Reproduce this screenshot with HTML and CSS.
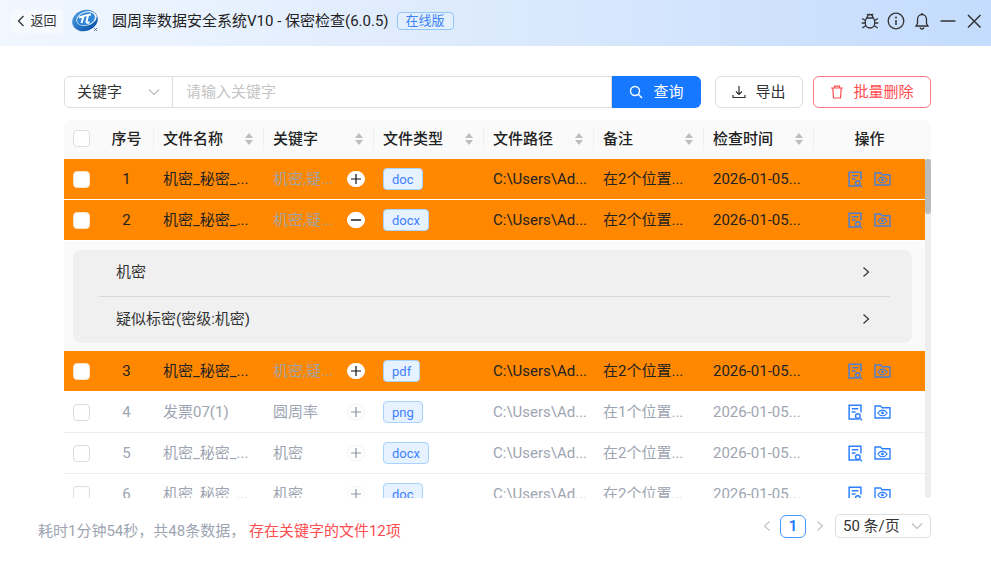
FILE: index.html
```html
<!DOCTYPE html>
<html lang="zh-CN">
<head>
<meta charset="utf-8">
<title>圆周率数据安全系统V10 - 保密检查</title>
<link rel="stylesheet" href="styles.css">
</head>
<body>
<svg class="defs" width="0" height="0" aria-hidden="true">
  <symbol id="i-doc" viewBox="0 0 16 18">
    <path d="M12 16H1.2V1.2h12.6V9" fill="none" stroke="currentColor" stroke-width="1.6"/>
    <path d="M4 5h7M4 8.500h4" fill="none" stroke="currentColor" stroke-width="1.500"/>
    <circle cx="10.500" cy="12.800" r="2.500" fill="none" stroke="currentColor" stroke-width="1.500"/>
    <path d="M12.500 14.800l2.300 2.400" fill="none" stroke="currentColor" stroke-width="1.500"/>
  </symbol>
  <symbol id="i-folder" viewBox="0 0 18 15">
    <path d="M1 1h6l1.500 2H17v11H1z" fill="none" stroke="currentColor" stroke-width="1.500"/>
    <path d="M4 8.500C5.300 6.500 7 5.500 9 5.500s3.700 1 5 3c-1.300 2-3 3-5 3s-3.700-1-5-3z" fill="none" stroke="currentColor" stroke-width="1.200"/>
    <circle cx="9" cy="8.500" r="1.500" fill="currentColor"/>
  </symbol>
  <symbol id="i-sort" viewBox="0 0 10 14">
    <path d="M5 1l4 5H1zM5 13L1 8h8z" fill="#bdbdbd"/>
  </symbol>
  <symbol id="i-plus" viewBox="0 0 18 16">
    <path d="M4 8h10M9 3v10" fill="none" stroke="currentColor" stroke-width="1.200"/>
  </symbol>
  <symbol id="i-minus" viewBox="0 0 18 16">
    <path d="M4 8h10" fill="none" stroke="currentColor" stroke-width="1.400"/>
  </symbol>
  <symbol id="i-chev" viewBox="0 0 10 12">
    <path d="M2.500 1.500L7.500 6l-5 4.500" fill="none" stroke="currentColor" stroke-width="1.200"/>
  </symbol>
</svg>

<header class="titlebar">
  <button class="back">
    <svg class="back-icon" viewBox="0 0 8 12"><path d="M6.500 1L1.500 6l5 5" fill="none" stroke="currentColor" stroke-width="1.300"/></svg>
    返回
  </button>
  <svg class="logo" viewBox="0 0 28 24">
    <defs><linearGradient id="lg" x1="0" y1="0" x2="0.6" y2="1"><stop offset="0" stop-color="#4f9fe4"/><stop offset="1" stop-color="#0f57ad"/></linearGradient></defs>
    <ellipse cx="13" cy="11.500" rx="13" ry="10.500" fill="url(#lg)" transform="rotate(-18 13 11.500)"/>
    <ellipse cx="14.500" cy="9.500" rx="10.500" ry="7" fill="#e6f1fb" transform="rotate(-18 14.500 9.500)"/>
    <ellipse cx="14" cy="9.800" rx="9.200" ry="6.200" fill="#2f86d8" transform="rotate(-18 14 9.800)"/>
    <path d="M7 8.500c4-1.500 8-2.500 12-3M11.500 7.500L9.500 14M16 6.500l-1.500 6c-.3 1.300.8 1.600 3 .8" fill="none" stroke="#fff" stroke-width="2"/>
    <path d="M22 19l3 3M25 19l-3 3" stroke="#5b7fa8" stroke-width="1"/>
  </svg>
  <h1 class="app-title">圆周率数据安全系统V10 - 保密检查(6.0.5)</h1>
  <span class="edition">在线版</span>
  <div class="win-tools">
    <svg class="tool" viewBox="0 0 18 18"><g fill="none" stroke="currentColor" stroke-width="1.300"><path d="M5.500 6h7c1 1.500 1.300 3 1.300 4.500 0 3.200-2 5.500-4.800 5.500s-4.800-2.300-4.800-5.500C4.200 9 4.500 7.500 5.500 6z"/><path d="M6.200 6c0-2 1.200-3.500 2.800-3.500S11.800 4 11.800 6M6 2l1.500 1.500M12 2l-1.500 1.500M1 6.500l3.500 2M17 6.500l-3.500 2M.7 11h3.500M17.300 11h-3.500M1.300 16l3.700-2.500M16.700 16L13 13.500"/></g></svg>
    <svg class="tool" viewBox="0 0 18 18"><circle cx="9" cy="9" r="7.800" fill="none" stroke="currentColor" stroke-width="1.300"/><path d="M9 8v5" stroke="currentColor" stroke-width="1.500"/><circle cx="9" cy="5.500" r="1" fill="currentColor"/></svg>
    <svg class="tool" viewBox="0 0 18 18"><path d="M3 14h12l-1.500-2.500V7.500C13.500 4.500 11.500 2.500 9 2.500S4.500 4.500 4.500 7.500v4z" fill="none" stroke="currentColor" stroke-width="1.300"/><path d="M9 1v1.500M7 15.500c.4 1 1.100 1.500 2 1.500s1.600-.5 2-1.500" fill="none" stroke="currentColor" stroke-width="1.300"/></svg>
    <svg class="tool" viewBox="0 0 18 18"><path d="M1.500 9h15" stroke="currentColor" stroke-width="1.500"/></svg>
    <svg class="tool" viewBox="0 0 18 18"><path d="M3 3l12.500 12.500M15.500 3L3 15.500" stroke="currentColor" stroke-width="1.500"/></svg>
  </div>
</header>

<main class="content">
  <section class="toolbar">
    <div class="search">
      <div class="search-select">关键字
        <svg class="select-chev" viewBox="0 0 12 8"><path d="M1 1.500l5 5 5-5" fill="none" stroke="currentColor" stroke-width="1.100"/></svg>
      </div>
      <div class="search-input">请输入关键字</div>
      <button class="search-btn">
        <svg class="btn-icon" viewBox="0 0 14 14"><circle cx="6" cy="6" r="4.500" fill="none" stroke="currentColor" stroke-width="1.400"/><path d="M9.300 9.300L13 13" stroke="currentColor" stroke-width="1.400"/></svg>
        查询
      </button>
    </div>
    <button class="btn btn-export">
      <svg class="btn-icon" viewBox="0 0 14 14"><path d="M7 1v8M4 6.500L7 9.500l3-3M1 10v2.500h12V10" fill="none" stroke="currentColor" stroke-width="1.200"/></svg>
      导出
    </button>
    <button class="btn btn-delete">
      <svg class="btn-icon" viewBox="0 0 14 14"><path d="M1 3h12M4.500 3V1.200h5V3M2.800 3l.7 10h7l.7-10" fill="none" stroke="currentColor" stroke-width="1.200"/></svg>
      批量删除
    </button>
  </section>

  <section class="table">
    <div class="grid head">
      <div class="cell cb-cell"><span class="check"></span></div>
      <div class="cell center">序号</div>
      <div class="cell sep sortable">文件名称<svg class="sort"><use href="#i-sort"/></svg></div>
      <div class="cell sep sortable">关键字<svg class="sort"><use href="#i-sort"/></svg></div>
      <div class="cell sep sortable">文件类型<svg class="sort"><use href="#i-sort"/></svg></div>
      <div class="cell sep sortable">文件路径<svg class="sort"><use href="#i-sort"/></svg></div>
      <div class="cell sep sortable">备注<svg class="sort"><use href="#i-sort"/></svg></div>
      <div class="cell sep sortable">检查时间<svg class="sort"><use href="#i-sort"/></svg></div>
      <div class="cell sep center">操作</div>
    </div>
    <div class="scroller">
      <div class="rows">
        <div class="grid row hit">
          <div class="cell cb-cell"><span class="check"></span></div>
          <div class="cell center">1</div>
          <div class="cell">机密_秘密_...</div>
          <div class="cell kw"><span class="kw-text">机密,疑...</span><span class="toggle"><svg><use href="#i-plus"/></svg></span></div>
          <div class="cell"><span class="tag">doc</span></div>
          <div class="cell">C:\Users\Ad...</div>
          <div class="cell">在2个位置...</div>
          <div class="cell">2026-01-05...</div>
          <div class="cell actions"><svg class="a-doc"><use href="#i-doc"/></svg><svg class="a-folder"><use href="#i-folder"/></svg></div>
        </div>
        <div class="grid row hit">
          <div class="cell cb-cell"><span class="check"></span></div>
          <div class="cell center">2</div>
          <div class="cell">机密_秘密_...</div>
          <div class="cell kw"><span class="kw-text">机密,疑...</span><span class="toggle"><svg><use href="#i-minus"/></svg></span></div>
          <div class="cell"><span class="tag">docx</span></div>
          <div class="cell">C:\Users\Ad...</div>
          <div class="cell">在2个位置...</div>
          <div class="cell">2026-01-05...</div>
          <div class="cell actions"><svg class="a-doc"><use href="#i-doc"/></svg><svg class="a-folder"><use href="#i-folder"/></svg></div>
        </div>
        <div class="detail">
          <div class="panel">
            <div class="panel-item"><span>机密</span><svg class="chev"><use href="#i-chev"/></svg></div>
            <div class="panel-item"><span>疑似标密(密级:机密)</span><svg class="chev"><use href="#i-chev"/></svg></div>
          </div>
        </div>
        <div class="grid row hit">
          <div class="cell cb-cell"><span class="check"></span></div>
          <div class="cell center">3</div>
          <div class="cell">机密_秘密_...</div>
          <div class="cell kw"><span class="kw-text">机密,疑...</span><span class="toggle"><svg><use href="#i-plus"/></svg></span></div>
          <div class="cell"><span class="tag">pdf</span></div>
          <div class="cell">C:\Users\Ad...</div>
          <div class="cell">在2个位置...</div>
          <div class="cell">2026-01-05...</div>
          <div class="cell actions"><svg class="a-doc"><use href="#i-doc"/></svg><svg class="a-folder"><use href="#i-folder"/></svg></div>
        </div>
        <div class="grid row">
          <div class="cell cb-cell"><span class="check"></span></div>
          <div class="cell center">4</div>
          <div class="cell">发票07(1)</div>
          <div class="cell kw"><span class="kw-text">圆周率</span><span class="toggle"><svg><use href="#i-plus"/></svg></span></div>
          <div class="cell"><span class="tag">png</span></div>
          <div class="cell">C:\Users\Ad...</div>
          <div class="cell">在1个位置...</div>
          <div class="cell">2026-01-05...</div>
          <div class="cell actions"><svg class="a-doc"><use href="#i-doc"/></svg><svg class="a-folder"><use href="#i-folder"/></svg></div>
        </div>
        <div class="grid row">
          <div class="cell cb-cell"><span class="check"></span></div>
          <div class="cell center">5</div>
          <div class="cell">机密_秘密_...</div>
          <div class="cell kw"><span class="kw-text">机密</span><span class="toggle"><svg><use href="#i-plus"/></svg></span></div>
          <div class="cell"><span class="tag">docx</span></div>
          <div class="cell">C:\Users\Ad...</div>
          <div class="cell">在2个位置...</div>
          <div class="cell">2026-01-05...</div>
          <div class="cell actions"><svg class="a-doc"><use href="#i-doc"/></svg><svg class="a-folder"><use href="#i-folder"/></svg></div>
        </div>
        <div class="grid row">
          <div class="cell cb-cell"><span class="check"></span></div>
          <div class="cell center">6</div>
          <div class="cell">机密_秘密_...</div>
          <div class="cell kw"><span class="kw-text">机密</span><span class="toggle"><svg><use href="#i-plus"/></svg></span></div>
          <div class="cell"><span class="tag">doc</span></div>
          <div class="cell">C:\Users\Ad...</div>
          <div class="cell">在2个位置...</div>
          <div class="cell">2026-01-05...</div>
          <div class="cell actions"><svg class="a-doc"><use href="#i-doc"/></svg><svg class="a-folder"><use href="#i-folder"/></svg></div>
        </div>
      </div>
      <div class="scrollbar"><div class="thumb"></div></div>
    </div>
  </section>

  <footer class="footer">
    <div class="summary">耗时1分钟54秒，共48条数据， <span class="alert">存在关键字的文件12项</span></div>
    <div class="pager">
      <svg class="page-arrow" viewBox="0 0 10 12"><path d="M7.500 1.500L2.500 6l5 4.500" fill="none" stroke="currentColor" stroke-width="1.200"/></svg>
      <span class="page-current">1</span>
      <svg class="page-arrow" viewBox="0 0 10 12"><path d="M2.500 1.500L7.500 6l-5 4.500" fill="none" stroke="currentColor" stroke-width="1.200"/></svg>
      <div class="page-size">50 条/页
        <svg class="select-chev" viewBox="0 0 12 8"><path d="M1 1.500l5 5 5-5" fill="none" stroke="currentColor" stroke-width="1.100"/></svg>
      </div>
    </div>
  </footer>
</main>
</body>
</html>
```

FILE: styles.css
```css
* { box-sizing: border-box; }
html, body { margin: 0; height: 100%; overflow: hidden; background: #fff; }
body {
  font-family: Roboto, "Noto Sans CJK SC", sans-serif;
  font-size: 15px;
  line-height: 20px;
  color: #222;
}
button { font: inherit; cursor: pointer; }
.defs { position: absolute; }

/* title bar */
.titlebar {
  height: 46px;
  display: flex;
  align-items: center;
  padding: 0 8px 4px 10px;
  background: linear-gradient(90deg, #f1f7ff 0%, #deebfd 45%, #c4dcfd 100%);
}
.back {
  width: 54px;
  height: 25px;
  margin-right: 8px;
  display: flex;
  align-items: center;
  justify-content: center;
  gap: 5px;
  padding: 0;
  font-size: 13px;
  color: #333;
  background: #f6faff;
  border: 1px solid #f2f7ff;
  border-radius: 5px;
}
.back-icon { width: 8px; height: 12px; }
.logo { width: 28px; height: 24px; margin-right: 12px; flex: none; }
.app-title { margin: 0 8px 0 0; font-size: 15px; font-weight: 400; color: #222; white-space: nowrap; }
.edition {
  width: 57px;
  height: 18px;
  line-height: 16px;
  font-size: 13px;
  text-align: center;
  color: #3b82f6;
  background: #e3effd;
  border: 1px solid #93c5fb;
  border-radius: 4px;
}
.win-tools { margin-left: auto; display: flex; align-items: center; gap: 8px; color: #333; }
.tool { width: 18px; height: 18px; display: block; }

/* toolbar */
.content { padding: 30px 60px 0 0; }
.toolbar { margin-left: 64px; display: flex; height: 32px; }
.search { width: 637px; flex: none; display: flex; }
.search-select {
  width: 109px;
  flex: none;
  display: flex;
  align-items: center;
  justify-content: space-between;
  padding: 0 12px;
  border: 1px solid #ddd;
  border-radius: 6px 0 0 6px;
  color: #333;
}
.select-chev { width: 12px; height: 8px; color: #bbb; }
.search-input {
  flex: 1;
  display: flex;
  align-items: center;
  padding-left: 13px;
  color: #c4c4c4;
  border: 1px solid #ddd;
  border-left: 0;
}
.search-btn {
  width: 89px;
  flex: none;
  display: flex;
  align-items: center;
  justify-content: center;
  gap: 10px;
  padding: 0;
  color: #fff;
  background: #1677ff;
  border: 0;
  border-radius: 0 6px 6px 0;
}
.btn-icon { width: 14px; height: 14px; }
.btn {
  flex: none;
  display: flex;
  align-items: center;
  justify-content: center;
  gap: 9px;
  padding: 0;
  background: #fff;
  border-radius: 6px;
}
.btn-export { width: 88px; margin-left: 14px; color: #333; border: 1px solid #ddd; }
.btn-delete { width: 118px; margin-left: 10px; color: #ff4d4f; border: 1px solid #ff7a80; }

/* table */
.table { margin: 12px 0 0 64px; }
.grid {
  display: grid;
  grid-template-columns: 36px 53px 110px 110px 110px 110px 110px 110px 112px;
  align-items: center;
}
.head {
  height: 39px;
  padding: 0 6px 2px 0;
  background: #fafafa;
  border-radius: 8px 8px 0 0;
  font-weight: 500;
  color: #222;
}
.cell { padding: 0 10px; white-space: nowrap; overflow: hidden; }
.cb-cell { padding: 0 0 0 9px; display: flex; align-items: center; }
.center { text-align: center; padding: 0; }
.sep { border-left: 1px solid #f0f0f0; line-height: 22px; }
.sortable { display: flex; align-items: center; justify-content: space-between; padding: 0 9px 0 9px; }
.sort { width: 10px; height: 14px; flex: none; }
.check {
  width: 17px;
  height: 17px;
  display: block;
  background: #fff;
  border: 1px solid #dcdcdc;
  border-radius: 4px;
}
.scroller { display: flex; height: 339px; overflow: hidden; }
.rows { width: 861px; flex: none; }
.row {
  height: 41px;
  border-bottom: 1px solid #eeeeee;
  color: #9ea5b2;
}
.hit { background: #ff8800; color: #222; border-bottom-color: #fff; }
.hit .check { border-color: #f6e2c4; }
.kw { display: flex; align-items: center; justify-content: space-between; padding-right: 8px; }
.hit .kw-text { color: #a3a3a3; }
.toggle {
  width: 18px;
  height: 16px;
  display: block;
  background: #fff;
  border: 1px solid #f4f4f4;
  border-radius: 8px;
  color: #8d95a3;
}
.toggle svg { width: 18px; height: 16px; display: block; margin: -1px 0 0 -1px; }
.hit .toggle { border-color: #fff; color: #111; }
.tag {
  display: inline-block;
  height: 22px;
  line-height: 21px;
  padding: 0 8px;
  font-size: 13px;
  color: #4080ff;
  background: #e6f2ff;
  border: 1px solid #a9d2fd;
  border-radius: 4px;
  vertical-align: middle;
}
.actions { display: flex; align-items: center; justify-content: center; gap: 11px; padding: 0; color: #2f80ff; }
.hit .actions { color: #4a7fd4; }
.a-doc { width: 15px; height: 17px; }
.a-folder { width: 17px; height: 14px; }

.detail { height: 110px; padding: 9px 13px 8px 9px; background: #fafafa; }
.panel { height: 93px; padding: 0 22px 0 26px; background: #f0f0f0; border-radius: 8px; }
.panel-item {
  height: 46.500px;
  display: flex;
  align-items: center;
  justify-content: space-between;
  padding: 0 19px 2px 17px;
  color: #333;
}
.panel-item:first-child { border-bottom: 1px solid #d9d9d9; }
.chev { width: 10px; height: 12px; color: #333; }

.scrollbar { width: 6px; flex: none; background: #eeeeee; border-radius: 0 0 3px 3px; }
.thumb { height: 55px; background: #bbbbbb; border-radius: 3px; }

/* footer */
.footer {
  margin: 16px 0 0 38px;
  height: 24px;
  display: flex;
  align-items: center;
  justify-content: space-between;
}
.summary { color: #9ea5b2; padding-top: 10px; }
.alert { color: #ff4d4f; }
.pager { display: flex; align-items: center; }
.page-arrow { width: 10px; height: 12px; color: #c4c4c4; }
.page-current {
  width: 26px;
  height: 23px;
  margin: 0 9px 0 8px;
  line-height: 21px;
  text-align: center;
  font-weight: 600;
  color: #1677ff;
  border: 1px solid #4c97ff;
  border-radius: 6px;
}
.page-size {
  width: 96px;
  height: 24px;
  margin-left: 10px;
  display: flex;
  align-items: center;
  justify-content: space-between;
  padding: 0 7px;
  color: #333;
  border: 1px solid #ddd;
  border-radius: 5px;
}
```
